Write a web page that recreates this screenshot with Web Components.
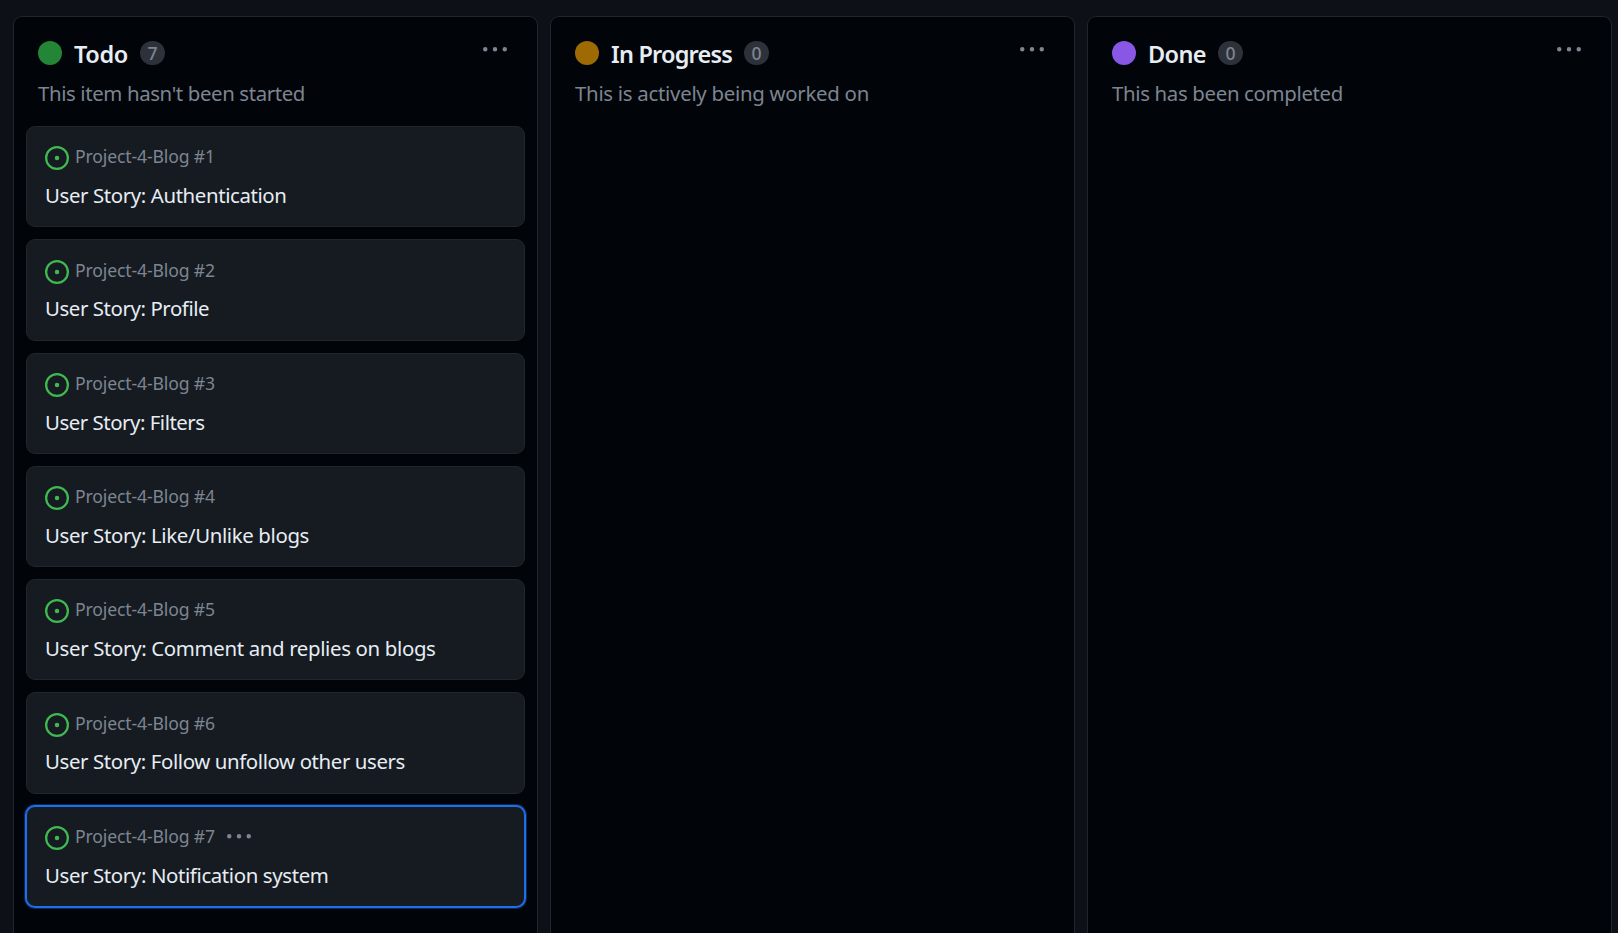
<!DOCTYPE html>
<html lang="en">
<head>
<meta charset="utf-8">
<title>Project board</title>
<style>
html, body { margin: 0; height: 100%; }
body { background: #0d1117; color: #e6edf3; font-family: "Noto Sans", "Open Sans", sans-serif; overflow: hidden; }
</style>
</head>
<body>
<project-board>
  <board-column color="#238636" heading="Todo" hw="54" count="7" about="This item hasn't been started" aw="267">
    <issue-card number="1" tw="241.5">User Story: Authentication</issue-card>
    <issue-card number="2" tw="164.2">User Story: Profile</issue-card>
    <issue-card number="3" tw="159.6">User Story: Filters</issue-card>
    <issue-card number="4" tw="264">User Story: Like/Unlike blogs</issue-card>
    <issue-card number="5" tw="390.5">User Story: Comment and replies on blogs</issue-card>
    <issue-card number="6" tw="360">User Story: Follow unfollow other users</issue-card>
    <issue-card number="7" tw="283.5" selected>User Story: Notification system</issue-card>
  </board-column>
  <board-column color="#9e6a03" heading="In Progress" hw="121" count="0" about="This is actively being worked on" aw="294"></board-column>
  <board-column color="#8957e5" heading="Done" hw="58" count="0" about="This has been completed" aw="231"></board-column>
</project-board>
<script>
const define = (name, html, setup) => customElements.define(name, class extends HTMLElement {
  connectedCallback() {
    if (this.shadowRoot) return;
    const root = this.attachShadow({ mode: 'open' });
    root.innerHTML = typeof html === 'function' ? html(this) : html;
    if (setup) setup(this, root);
  }
});

// One line of text, tracked so that its advance equals the width attribute.
define('fit-text', '<style>:host{display:block;white-space:nowrap}span{display:inline-block}</style><span><slot></slot></span>', (host, root) => {
  const span = root.querySelector('span');
  const width = +host.getAttribute('width');
  const n = host.textContent.length;
  span.style.letterSpacing = ((width - span.getBoundingClientRect().width) / n) + 'px';
  host.style.width = width + 'px';
});

define('kebab-icon', `<style>:host{display:block;width:24px;height:24px;color:#7d8590}svg{display:block}</style>
<svg width="24" height="24" viewBox="0 0 16 16" fill="currentColor"><path d="M8 9a1.5 1.5 0 1 0 0-3 1.5 1.5 0 0 0 0 3ZM1.5 9a1.5 1.5 0 1 0 0-3 1.5 1.5 0 0 0 0 3Zm13 0a1.5 1.5 0 1 0 0-3 1.5 1.5 0 0 0 0 3Z"/></svg>`);

define('open-icon', `<style>:host{display:block;width:24px;height:24px;color:#3fb950}svg{display:block}</style>
<svg width="24" height="24" viewBox="0 0 16 16" fill="currentColor"><path d="M8 9.5a1.5 1.5 0 1 0 0-3 1.5 1.5 0 0 0 0 3Z"/><path d="M8 0a8 8 0 1 1 0 16A8 8 0 0 1 8 0ZM1.5 8a6.5 6.5 0 1 0 13 0 6.5 6.5 0 0 0-13 0Z"/></svg>`);

define('issue-card', el => `<style>
:host{display:block;box-sizing:border-box;height:101.25px;padding:16.1px 18px 0;border:1px solid #21262d;border-radius:9px;background:#161b22}
:host([selected]){border-color:#1f6feb;box-shadow:0 0 0 1px #1f6feb,0 0 0 2px #1f6feb59}
.meta{display:flex;align-items:center;height:27px;color:#7d8590;font-size:17.6px;line-height:27px}
open-icon{margin:3px 6px 0 0}
kebab-icon{margin:1px 0 0 12px}
.title{margin-top:8.9px;font-size:20.4px;line-height:32px}
</style>
<div class="meta"><open-icon></open-icon><fit-text width="140">Project-4-Blog #${el.getAttribute('number')}</fit-text>${el.hasAttribute('selected') ? '<kebab-icon></kebab-icon>' : ''}</div>
<fit-text class="title" width="${el.getAttribute('tw')}">${el.textContent}</fit-text>`);

define('board-column', el => `<style>
:host{display:block;box-sizing:border-box;background:#010409;border:1px solid #21262d;border-bottom:0;border-radius:9px 9px 0 0;padding:18px 12px 0}
header{display:flex;align-items:center;height:36px;padding:0 18px 0 12px}
.dot{width:24px;height:24px;border-radius:50%;background:${el.getAttribute('color')};margin-right:12px}
.heading{font-size:23.5px;font-weight:600;line-height:36px;margin-top:2px}
.count{width:25px;height:24px;border-radius:12px;background:#2d313a;color:#7d8590;font-size:17.6px;font-weight:500;line-height:24px;text-align:center;margin-left:12px}
kebab-icon{margin:-6px 0 0 auto}
.about{margin:6px 0 0 12px;color:#7d8590;font-size:20.4px;line-height:32px}
.cards{display:flex;flex-direction:column;gap:12px;margin-top:17.2px}
</style>
<header><span class="dot"></span><fit-text class="heading" width="${el.getAttribute('hw')}">${el.getAttribute('heading')}</fit-text><span class="count">${el.getAttribute('count')}</span><kebab-icon></kebab-icon></header>
<fit-text class="about" width="${el.getAttribute('aw')}">${el.getAttribute('about')}</fit-text>
<div class="cards"><slot></slot></div>`);

define('project-board', `<style>
:host{display:grid;grid-template-columns:repeat(3,525px);gap:12px;box-sizing:border-box;height:100vh;padding:16px 0 0 13px}
</style><slot></slot>`);
</script>
</body>
</html>
